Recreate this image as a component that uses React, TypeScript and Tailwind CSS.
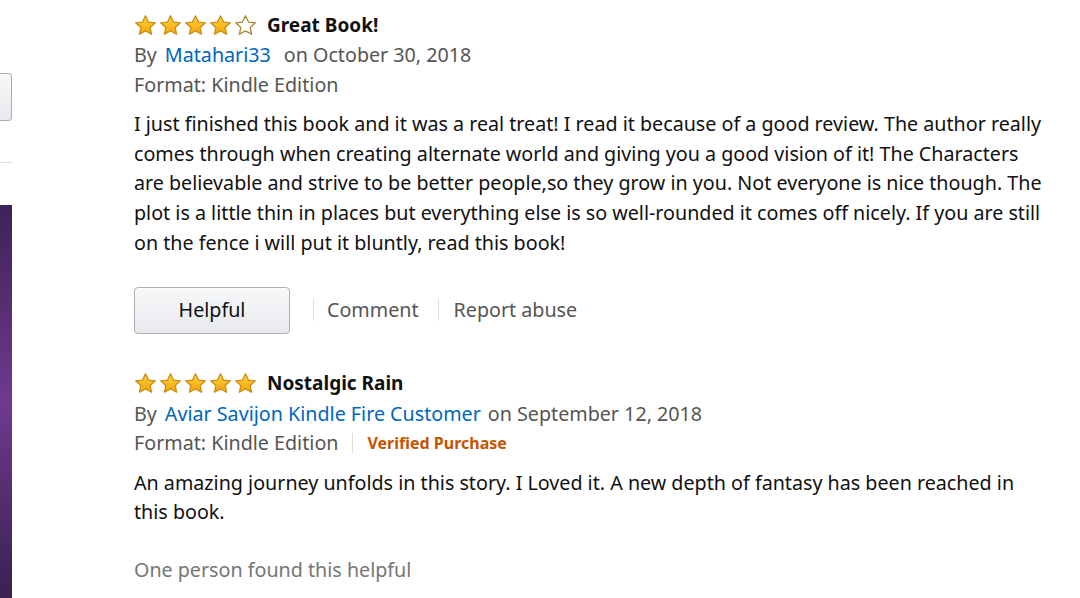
import React from 'react';

type Review = {
  rating: number;
  title: string;
  author: string;
  date: string;
  verified?: boolean;
  lines: string[];
  helpfulCount?: string;
  actions?: boolean;
};

const reviews: Review[] = [
  {
    rating: 4,
    title: 'Great Book!',
    author: 'Matahari33',
    date: 'October 30, 2018',
    lines: [
      'I just finished this book and it was a real treat! I read it because of a good review. The author really',
      'comes through when creating alternate world and giving you a good vision of it! The Characters',
      'are believable and strive to be better people,so they grow in you. Not everyone is nice though. The',
      'plot is a little thin in places but everything else is so well-rounded it comes off nicely. If you are still',
      'on the fence i will put it bluntly, read this book!',
    ],
    actions: true,
  },
  {
    rating: 5,
    title: 'Nostalgic Rain',
    author: 'Aviar Savijon Kindle Fire Customer',
    date: 'September 12, 2018',
    verified: true,
    lines: [
      'An amazing journey unfolds in this story. I Loved it. A new depth of fantasy has been reached in',
      'this book.',
    ],
    helpfulCount: 'One person found this helpful',
  },
];

function Star({ filled }: { filled: boolean }) {
  return (
    <svg width="23" height="23" viewBox="0 0 24 24" className="shrink-0">
      <defs>
        <linearGradient id="starFill" x1="0" y1="0" x2="0" y2="1">
          <stop offset="0%" stopColor="#ffd24a" />
          <stop offset="100%" stopColor="#f2a500" />
        </linearGradient>
      </defs>
      <path
        d="M12 1.8l3.1 6.6 7.2.8-5.4 4.9 1.5 7.1L12 17.6l-6.4 3.6 1.5-7.1L1.7 9.2l7.2-.8z"
        fill={filled ? 'url(#starFill)' : '#ffffff'}
        stroke={filled ? '#c98d12' : '#a8842e'}
        strokeWidth="1.3"
        strokeLinejoin="round"
      />
    </svg>
  );
}

function Stars({ rating }: { rating: number }) {
  return (
    <div className="flex items-center gap-[2px]">
      {[0, 1, 2, 3, 4].map((i) => (
        <Star key={i} filled={i < rating} />
      ))}
    </div>
  );
}

function ReviewBlock({ review }: { review: Review }) {
  return (
    <div>
      <div className="flex items-center h-[26px]">
        <Stars rating={review.rating} />
        <span className="ml-[10px] font-bold text-[#111] text-[19px]">{review.title}</span>
      </div>
      <div className="mt-[2px] h-[30px] flex items-center text-[#555]">
        <span>By</span>
        <span className={review.actions ? 'ml-[8px] mr-[13px] text-[#0066c0]' : 'ml-[8px] mr-[7px] text-[#0066c0]'}>
          {review.author}
        </span>
        <span>on {review.date}</span>
      </div>
      <div className="h-[29px] flex items-center text-[#555]">
        <span>Format: Kindle Edition</span>
        {review.verified ? (
          <>
            <span className="mx-[14px] h-[20px] w-px bg-[#ddd]" />
            <span className="font-bold text-[#c45500] text-[16px]">Verified Purchase</span>
          </>
        ) : null}
      </div>
      <p className={review.actions ? 'mt-[10px] leading-[29.7px] text-[#111]' : 'mt-[10px] leading-[29px] text-[#111]'}>
        {review.lines.map((line) => (
          <span key={line} className="block whitespace-nowrap">
            {line}
          </span>
        ))}
      </p>
      {review.actions ? (
        <div className="mt-[29px] flex items-center text-[#555]">
          <button className="w-[156px] h-[47px] rounded-[4px] border border-[#adb1b8] bg-gradient-to-b from-[#f7f8fa] to-[#e7e9ec] text-[#111] shadow-[0_1px_0_rgba(255,255,255,0.6)_inset]">
            Helpful
          </button>
          <span className="ml-[23px] h-[22px] w-px bg-[#ddd]" />
          <span className="ml-[13px]">Comment</span>
          <span className="ml-[19px] h-[22px] w-px bg-[#ddd]" />
          <span className="ml-[15px]">Report abuse</span>
        </div>
      ) : null}
      {review.helpfulCount ? (
        <div className="mt-[29px] h-[30px] flex items-center text-[#767676]">{review.helpfulCount}</div>
      ) : null}
    </div>
  );
}

export default function App() {
  return (
    <div
      className="h-[598px] w-[1080px] overflow-hidden bg-white flex text-[19.7px]"
      style={{ fontFamily: '"Noto Sans", "Open Sans", sans-serif' }}
    >
      <aside className="w-[12px] shrink-0 flex flex-col">
        <div className="mt-[73px] h-[48px] rounded-r-[4px] border border-l-0 border-[#a9adb3] bg-gradient-to-b from-[#f7f8fa] to-[#e7e9ec]" />
        <div className="mt-[41px] h-px bg-[#dcdcdc]" />
        <div className="mt-[42px] flex-1 bg-gradient-to-b from-[#3f2258] via-[#6e3a8f] to-[#3a2152]" />
      </aside>
      <main className="ml-[122px] pt-[12px] flex flex-col">
        <ReviewBlock review={reviews[0]} />
        <div className="mt-[37px]">
          <ReviewBlock review={reviews[1]} />
        </div>
      </main>
    </div>
  );
}
